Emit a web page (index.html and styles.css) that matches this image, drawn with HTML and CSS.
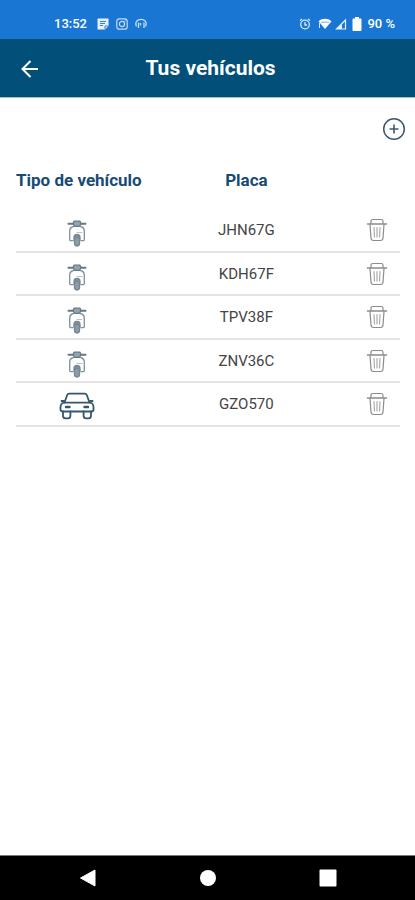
FILE: index.html
```html
<!DOCTYPE html>
<html lang="es">
<head>
<meta charset="utf-8">
<meta name="viewport" content="width=device-width, initial-scale=1">
<title>Tus vehículos</title>
<link rel="stylesheet" href="styles.css">
</head>
<body>
<svg class="sprite" aria-hidden="true">
  <symbol id="scooter" viewBox="0 0 20 28">
    <g fill="none" stroke="#647985" stroke-width="1.3" stroke-linecap="round" stroke-linejoin="round">
      <path d="M1.500 4.700h5M13.500 4.700h5" stroke-width="2"/>
      <path d="M7 2.200h6l1 2.500-1.500 2.600h-5L6 4.700z" fill="#93a4ad"/>
      <path d="M6.500 7.500C3.500 8.300 2.700 10 2.700 12v8.500c0 .8.500 1.200 1.200 1.200H6M13.500 7.500c3 .8 3.800 2.500 3.800 4.500v8.500c0 .8-.5 1.200-1.200 1.200H14" stroke="#7e919c"/>
      <path d="M10 13.500h5" stroke="#b7c3c9" stroke-width="1"/>
      <path d="M7 21v-2.500c0-2 1.200-3 3-3s3 1 3 3V21z" fill="#8799a3" stroke="#748792"/>
      <rect x="7.500" y="18" width="5" height="9" rx="2.400" fill="#8d9da7" stroke="#748792"/>
    </g>
  </symbol>
  <symbol id="car" viewBox="0 0 36 28">
    <g fill="none" stroke="#36566c" stroke-width="1.800" stroke-linecap="round" stroke-linejoin="round">
      <path d="M5.500 10.500 8.200 3c.4-1 1-1.400 2-1.400h15.600c1 0 1.600.4 2 1.400l2.700 7.500"/>
      <path d="M2.500 9H5M31 9h2.500"/>
      <path d="M5 10.700h26c2 0 3.500 2 3.500 4.500v2.300c0 1.300-.7 2-2 2h-29c-1.300 0-2-.7-2-2v-2.300c0-2.500 1.500-4.500 3.500-4.500z"/>
      <path d="M7 15h3.500M25.500 15H29" stroke-width="2.400"/>
      <path d="M4 19.500v4.200c0 1.600 1 2.600 2.700 2.600h2c1.700 0 2.700-1 2.700-2.600v-4.200M24.600 19.500v4.200c0 1.600 1 2.600 2.700 2.600h2c1.700 0 2.700-1 2.700-2.600v-4.200"/>
    </g>
  </symbol>
  <symbol id="trash" viewBox="0 0 22 24">
    <g fill="none" stroke="#8c8c8c" stroke-width="1.200" stroke-linecap="round" stroke-linejoin="round">
      <path d="M1.500 6h19" stroke-width="1.500"/>
      <path d="M5 5.500V3.300C5 2.100 5.700 1.500 6.800 1.500h8.400c1.100 0 1.800.6 1.800 1.800v2.200"/>
      <path d="m4 6.500 1 13.500c.1 1.700 1 2.500 2.500 2.500h7c1.500 0 2.400-.8 2.500-2.500l1-13.500"/>
      <path d="m8 9.500.5 9.500M11 9.500V19M14 9.500l-.5 9.500" stroke="#ababab"/>
    </g>
  </symbol>
</svg>
<div class="screen">
  <div class="status">
    <span class="clock">13:52</span>
    <svg class="glyph" viewBox="0 0 12 12" aria-hidden="true"><path d="M1 .5h10.500V8L8 11.500H.5V1z" fill="#e8f1fb"/><path d="M3 3.500h6M3 5.500h5M3 7.500h3M8 11V8h3" fill="none" stroke="#1976d2" stroke-width=".9"/></svg>
    <svg class="glyph" viewBox="0 0 12 12" fill="none" stroke="#c5dcf5" stroke-width="1.200" aria-hidden="true"><rect x=".8" y=".8" width="10.400" height="10.400" rx="2.500"/><circle cx="6" cy="6" r="2.600"/><path d="M8.500 2.800h1"/></svg>
    <svg class="glyph" viewBox="0 0 12 12" fill="none" stroke="#c5dcf5" stroke-width="1.300" aria-hidden="true"><path d="M1.500 8.500C-.5 4 2.500 1.300 6 1.300s6.500 2.700 4.500 7.200M3.500 4.500V10M9 4.500V10M5.500 5v2.500"/></svg>
    <span class="spacer"></span>
    <svg class="glyph alarm" viewBox="0 0 12 12" fill="none" stroke="#d7e7f8" stroke-width="1.300" aria-hidden="true"><circle cx="6" cy="6.500" r="4.300"/><path d="M1 2.500 3 1M11 2.500 9 1M6 4v3h2"/></svg>
    <svg class="glyph wifi" viewBox="0 0 14 12" aria-hidden="true"><path d="M.5 3.200C4-.1 10-.1 13.500 3.200L7 11z" fill="#fff"/><path d="M3 4.200h8" stroke="#1976d2" stroke-width=".6"/><path d="M1.500 5v5" stroke="#d7e7f8"/></svg>
    <svg class="glyph" viewBox="0 0 12 12" aria-hidden="true"><path d="M1.500 11 10.500 2v9z" fill="none" stroke="#e8f1fb" stroke-width="1.200"/><path d="M7 6v5H2z" fill="#e8f1fb"/></svg>
    <svg class="battery" viewBox="0 0 10 14" aria-hidden="true"><path d="M3 0h4v1.500h1.500c.6 0 1 .4 1 1V13c0 .6-.4 1-1 1h-7c-.6 0-1-.4-1-1V2.500c0-.6.4-1 1-1H3z" fill="#fff"/></svg>
    <span class="charge">90 %</span>
  </div>
  <header class="bar">
    <button class="icon-button" type="button" aria-label="Volver"><svg class="back" viewBox="0 0 20 20" fill="none" stroke="#fff" stroke-width="2" aria-hidden="true"><path d="M18 10H3M10.500 2 2.500 10l8 8"/></svg></button>
    <h1>Tus vehículos</h1>
  </header>
  <main>
    <div class="actions">
      <button class="icon-button" type="button" aria-label="Agregar vehículo"><svg class="add" viewBox="0 0 24 24" fill="none" stroke="#405574" stroke-width="1.500" aria-hidden="true"><circle cx="12" cy="12" r="10.300"/><path d="M12 7.500v9M7.500 12h9" stroke-width="1.600"/></svg></button>
    </div>
    <table>
      <thead><tr><th class="type" scope="col">Tipo de vehículo</th><th scope="col">Placa</th><td class="remove"></td></tr></thead>
      <tbody>
        <tr><td><svg class="scooter" role="img" aria-label="Moto"><use href="#scooter"/></svg></td><td>JHN67G</td><td><button class="icon-button" type="button" aria-label="Eliminar JHN67G"><svg class="trash"><use href="#trash"/></svg></button></td></tr>
        <tr><td><svg class="scooter" role="img" aria-label="Moto"><use href="#scooter"/></svg></td><td>KDH67F</td><td><button class="icon-button" type="button" aria-label="Eliminar KDH67F"><svg class="trash"><use href="#trash"/></svg></button></td></tr>
        <tr><td><svg class="scooter" role="img" aria-label="Moto"><use href="#scooter"/></svg></td><td>TPV38F</td><td><button class="icon-button" type="button" aria-label="Eliminar TPV38F"><svg class="trash"><use href="#trash"/></svg></button></td></tr>
        <tr><td><svg class="scooter" role="img" aria-label="Moto"><use href="#scooter"/></svg></td><td>ZNV36C</td><td><button class="icon-button" type="button" aria-label="Eliminar ZNV36C"><svg class="trash"><use href="#trash"/></svg></button></td></tr>
        <tr><td><svg class="car" role="img" aria-label="Carro"><use href="#car"/></svg></td><td>GZO570</td><td><button class="icon-button" type="button" aria-label="Eliminar GZO570"><svg class="trash"><use href="#trash"/></svg></button></td></tr>
      </tbody>
    </table>
  </main>
  <nav class="system">
    <button class="icon-button" type="button" aria-label="Atrás"><svg viewBox="0 0 18 18" aria-hidden="true"><path d="M1.500 9 16 1v16z" fill="#fff" stroke="#fff" stroke-linejoin="round"/></svg></button>
    <button class="icon-button" type="button" aria-label="Inicio"><svg viewBox="0 0 18 18" aria-hidden="true"><circle cx="9" cy="9" r="8" fill="#fff"/></svg></button>
    <button class="icon-button" type="button" aria-label="Recientes"><svg viewBox="0 0 18 18" aria-hidden="true"><rect x=".5" y=".5" width="17" height="17" rx="1" fill="#fff"/></svg></button>
  </nav>
</div>
</body>
</html>
```
FILE: styles.css
```css
* {
  box-sizing: border-box;
}

body {
  margin: 0;
  background: #fff;
  font-family: Roboto, "Liberation Sans", sans-serif;
}

svg {
  display: block;
}

.sprite {
  position: absolute;
  width: 0;
  height: 0;
}

.screen {
  display: flex;
  flex-direction: column;
  min-height: 100vh;
}

.icon-button {
  display: block;
  padding: 0;
  border: 0;
  background: none;
  cursor: pointer;
}

.status {
  display: flex;
  align-items: center;
  gap: 5px;
  padding: 16px 20px 8px 54px;
  background: #1976d2;
  color: #fff;
  font-size: 13px;
  font-weight: 500;
  line-height: 15px;
}

.clock {
  margin-right: 5px;
}

.glyph {
  width: 12px;
  height: 12px;
}

.glyph + .glyph {
  margin-left: 2px;
}

.wifi {
  width: 14px;
}

.glyph.wifi + .glyph {
  margin-left: -2px;
}

.battery {
  width: 10px;
  height: 14px;
}

.spacer {
  flex: 1;
}

.bar {
  display: grid;
  grid-template-columns: 20px 1fr 20px;
  align-items: center;
  padding: 17px 14px 16px 20px;
  border-bottom: 1px solid #a9bccb;
  background: #024f79;
  color: #fff;
}

.back {
  width: 20px;
  height: 20px;
}

h1 {
  margin: 0;
  font-size: 21px;
  font-weight: 700;
  line-height: 25px;
  text-align: center;
}

main {
  flex: 1;
}

.actions {
  display: flex;
  justify-content: flex-end;
  padding: 19px 9px 16px;
}

.add {
  width: 24px;
  height: 24px;
}

table {
  width: calc(100% - 31px);
  margin: 0 15px 0 16px;
  border-collapse: collapse;
  table-layout: fixed;
}

th,
td {
  height: 44px;
  padding: 0;
  color: #444;
  font-size: 15px;
  font-weight: 400;
  text-align: center;
  vertical-align: middle;
}

th,
thead td {
  height: 51px;
  padding-bottom: 5px;
  color: #174b76;
  font-size: 17px;
  font-weight: 700;
  white-space: nowrap;
}

tbody td {
  border-bottom: 2px solid #e4e4e4;
}

tbody tr:nth-child(even) td {
  height: 43px;
}

.type {
  width: 32%;
}

.remove {
  width: 12%;
}

td svg {
  margin: 0 auto;
}

td .icon-button {
  margin: 0 auto;
}

.scooter {
  width: 20px;
  height: 28px;
  margin-top: 6px;
}

.car {
  width: 36px;
  height: 28px;
  margin-top: 4px;
}

.trash {
  width: 22px;
  height: 24px;
}

.system {
  display: grid;
  grid-template-columns: repeat(3, 120px);
  justify-content: center;
  justify-items: center;
  padding: 13px 0;
  border-top: 1px solid #777;
  background: #000;
}

.system svg {
  width: 18px;
  height: 18px;
}
```
